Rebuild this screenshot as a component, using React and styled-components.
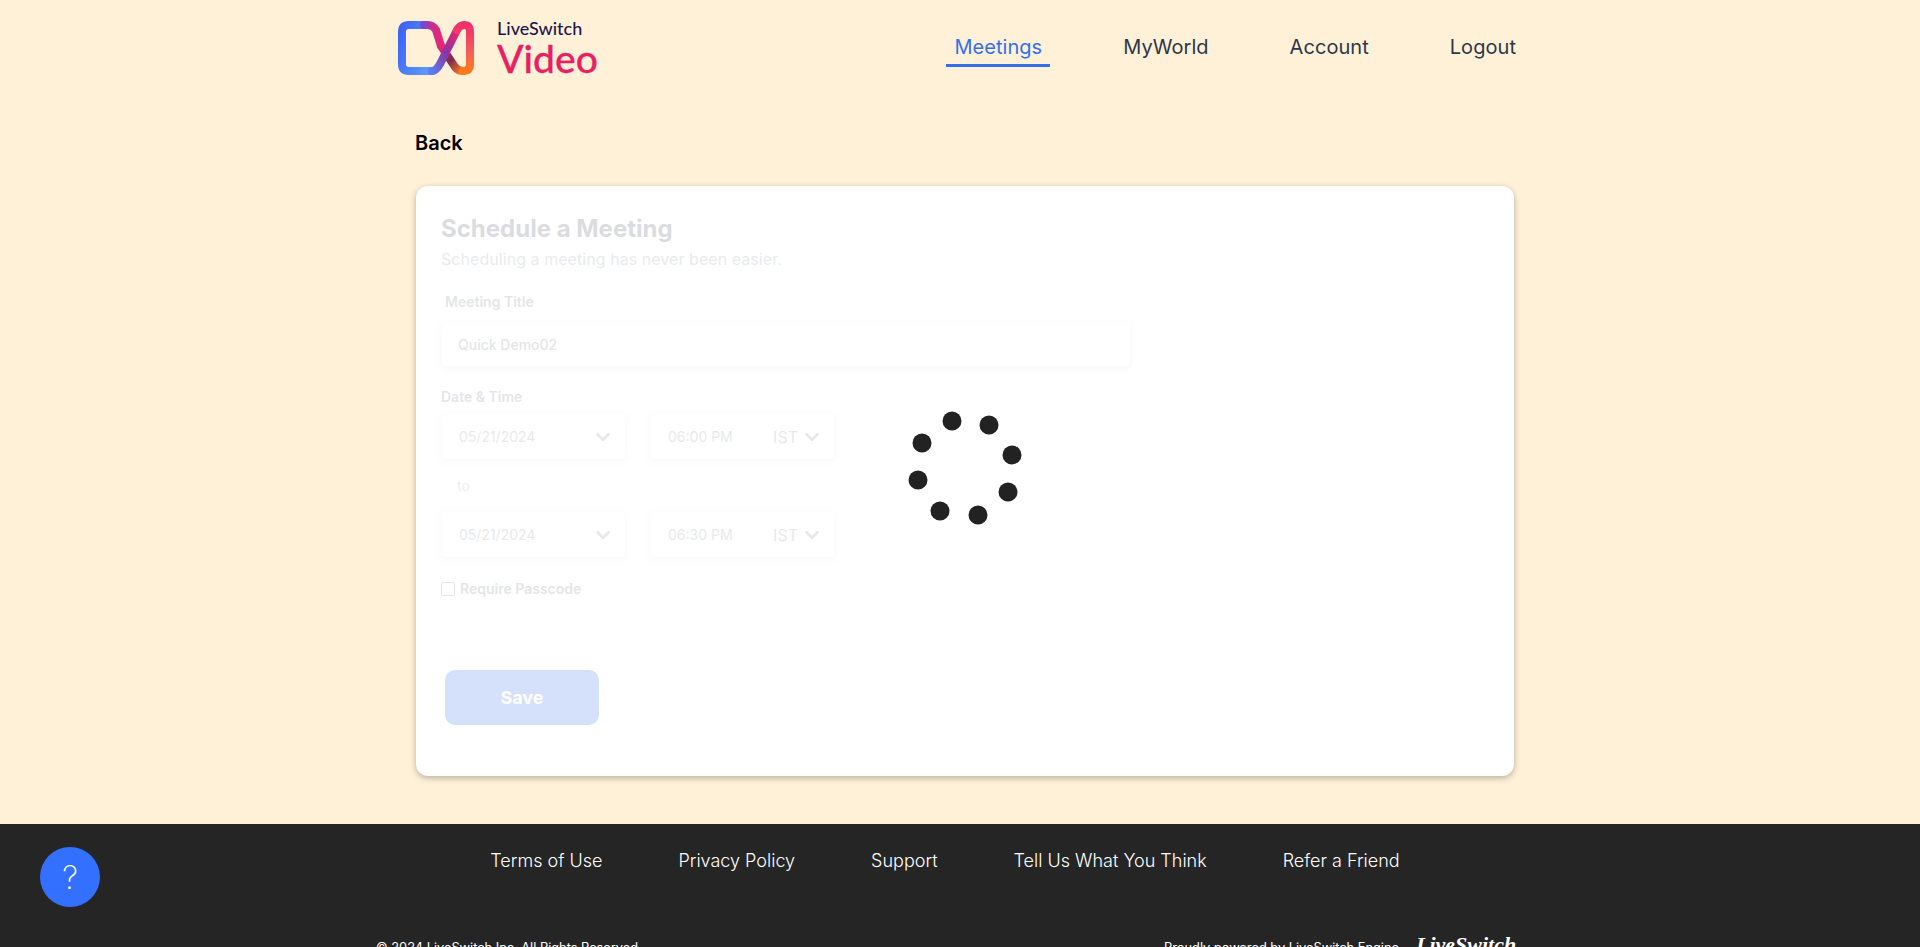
import styled, { createGlobalStyle } from 'styled-components'
import { ChevronDown } from 'lucide-react'

const GlobalStyle = createGlobalStyle`
  html, body {
    margin: 0;
    padding: 0;
    height: 100%;
    overflow: hidden;
    background: #fff1d8;
    font-family: Inter, "Liberation Sans", sans-serif;
  }
  * {
    box-sizing: border-box;
  }
`

const Page = styled.div`
  height: 947px;
  overflow: hidden;
  display: flex;
  flex-direction: column;
`
const Header = styled.header`
  width: 1126px;
  margin-left: 398px;
  height: 96px;
  display: flex;
  align-items: flex-start;
  justify-content: space-between;
`
const Logo = styled.div`
  display: flex;
  gap: 21px;
  padding-top: 20px;
`
const LogoText = styled.div`
  display: flex;
  flex-direction: column;
`
const LogoTop = styled.span`
  font-family: Lato, sans-serif;
  font-size: 18px;
  font-weight: 500;
  line-height: 17px;
  color: #1c1650;
`
const LogoBig = styled.span`
  font-family: Lato, sans-serif;
  font-size: 39px;
  font-weight: 500;
  line-height: 36px;
  margin-top: 3px;
  color: #e91e63;
  -webkit-text-stroke: 0.3px #e91e63;
`
const Nav = styled.nav`
  display: flex;
  gap: 65px;
  padding-top: 33px;
`
const NavLink = styled.a`
  font-size: 20px;
  font-weight: 400;
  letter-spacing: 0.05px;
  line-height: 28px;
  padding: 0 8px 3px;
  color: ${p => (p.$active ? '#3370e8' : '#2d3748')};
  border-bottom: 3px solid ${p => (p.$active ? '#3370e8' : 'transparent')};
`
const Main = styled.main`
  width: 1098px;
  margin-left: 416px;
  flex: 1;
`
const Back = styled.div`
  font-size: 20px;
  font-weight: 600;
  line-height: 28px;
  color: #000;
  margin: 33px 0 29px -1px;
`
const Card = styled.section`
  position: relative;
  height: 590px;
  background: #fff;
  border-radius: 12px;
  box-shadow: 0 2px 6px rgba(0, 0, 0, 0.28);
`
const Form = styled.div`
  opacity: 0.18;
  padding: 27px 25px;
`
const Title = styled.h1`
  margin: 0;
  font-size: 24px;
  font-weight: 700;
  line-height: 32px;
  color: #374151;
`
const Subtitle = styled.p`
  margin: 2px 0 0;
  font-size: 16px;
  letter-spacing: 0.055px;
  line-height: 24px;
  color: #6b7280;
  opacity: 0.8;
`
const Label = styled.label`
  display: block;
  font-size: 14px;
  font-weight: 600;
  line-height: 20px;
  color: #6b7280;
  margin: ${p => p.$margin};
`
const TextInput = styled.div`
  width: 688px;
  height: 43px;
  margin-left: 1px;
  padding-left: 16px;
  display: flex;
  align-items: center;
  border-radius: 4px;
  box-shadow: 0 2px 6px rgba(0, 0, 0, 0.14);
  font-size: 14px;
  font-weight: 500;
  color: #6b7280;
`
const Row = styled.div`
  display: flex;
  gap: 26px;
  margin-left: 1px;
`
const Field = styled.div`
  width: 183px;
  height: 45px;
  padding: 0 11px 0 17px;
  display: flex;
  align-items: center;
  justify-content: space-between;
  border-radius: 4px;
  box-shadow: 0 2px 6px rgba(0, 0, 0, 0.14);
  font-size: 14px;
  color: #6b7280;
  opacity: 0.85;
`
const Zone = styled.span`
  display: flex;
  align-items: center;
  gap: 3px;
  font-size: 16px;
`
const To = styled.div`
  font-size: 14px;
  line-height: 20px;
  color: #9ca3af;
  margin: 17px 0 16px 16px;
`
const CheckRow = styled.div`
  display: flex;
  align-items: center;
  gap: 5px;
  margin-top: 22px;
  font-size: 14px;
  font-weight: 600;
  line-height: 20px;
  color: #6b7280;
`
const Box = styled.span`
  width: 14px;
  height: 14px;
  border: 1.5px solid #6b7280;
  border-radius: 2px;
`
const Save = styled.button`
  display: block;
  width: 154px;
  height: 55px;
  margin: 71px 0 0 4px;
  border: none;
  border-radius: 10px;
  background: #1d5ce5;
  color: #fff;
  font-family: inherit;
  font-size: 18px;
  font-weight: 700;
`
const Spinner = styled.svg`
  position: absolute;
  left: 457px;
  top: 221px;
  width: 160px;
  height: 124px;
`
const Footer = styled.footer`
  height: 123px;
  flex-shrink: 0;
  background: #252525;
  color: #fff;
`
const FooterInner = styled.div`
  width: 1140px;
  margin-left: 376px;
`
const FooterLinks = styled.div`
  display: flex;
  justify-content: center;
  gap: 76px;
  padding: 25px 2px 0 0;
  font-size: 18px;
  font-weight: 300;
  line-height: 24px;
`
const FooterBottom = styled.div`
  display: flex;
  align-items: flex-start;
  justify-content: space-between;
  margin-top: 67px;
  font-size: 12.8px;
  line-height: 16px;
`
const Powered = styled.div`
  display: flex;
  gap: 17px;
`
const Script = styled.span`
  font-family: "Liberation Serif", serif;
  font-style: italic;
  font-weight: 700;
  font-size: 22px;
  line-height: 22px;
  margin-top: -6px;
  width: 100px;
`
const Help = styled.button`
  position: fixed;
  left: 40px;
  top: 847px;
  width: 60px;
  height: 60px;
  border: none;
  border-radius: 50%;
  background: #3370ff;
  color: #fff;
  font-family: inherit;
  font-size: 32px;
  font-weight: 200;
`

const LogoMark = () => (
  <svg width="78" height="56" viewBox="0 0 78 56" fill="none" strokeWidth="8" strokeLinecap="round">
    <defs>
      <linearGradient id="lsBlue" x1="0" y1="0" x2="1" y2="0.6">
        <stop offset="0" stopColor="#3d63f5" />
        <stop offset="1" stopColor="#5a97f8" />
      </linearGradient>
      <linearGradient id="lsTop" x1="0" y1="0" x2="1" y2="0">
        <stop offset="0" stopColor="#7a48d0" />
        <stop offset="0.5" stopColor="#c8308c" />
        <stop offset="1" stopColor="#ea2474" />
      </linearGradient>
      <linearGradient id="lsCross" x1="0" y1="1" x2="1" y2="0">
        <stop offset="0" stopColor="#5a7cf0" />
        <stop offset="0.5" stopColor="#8a35a5" />
        <stop offset="1" stopColor="#ee2468" />
      </linearGradient>
      <linearGradient id="lsLoop" x1="0" y1="0" x2="0" y2="1">
        <stop offset="0" stopColor="#f0306c" />
        <stop offset="0.6" stopColor="#f4605a" />
        <stop offset="1" stopColor="#ff7a1c" />
      </linearGradient>
      <linearGradient id="lsDown" x1="0" y1="0" x2="1" y2="1">
        <stop offset="0" stopColor="#e8246c" />
        <stop offset="0.5" stopColor="#7a2a50" />
        <stop offset="1" stopColor="#ff7a1c" />
      </linearGradient>
    </defs>
    <path d="M26 5H11Q4 5 4 12V44Q4 51 11 51H34" stroke="url(#lsBlue)" />
    <path d="M43 26L57 47Q60 51 65 51" stroke="url(#lsDown)" />
    <path d="M26 5H30Q35 5 38 10L43 26" stroke="url(#lsTop)" />
    <path d="M59 10L42 44Q38 51 34 51" stroke="url(#lsCross)" />
    <path d="M59 10Q62 5 66 5Q72 5 72 12V44Q72 51 65 51" stroke="url(#lsLoop)" />
  </svg>
)

const dots = [
  [79, 14], [116, 18], [139, 48], [135, 85],
  [105, 108], [67, 104], [45, 73], [49, 36],
]

const DateRow = ({ time }) => (
  <Row>
    <Field>
      05/21/2024
      <ChevronDown size={22} strokeWidth={3} />
    </Field>
    <Field>
      {time}
      <Zone>
        IST
        <ChevronDown size={22} strokeWidth={3} />
      </Zone>
    </Field>
  </Row>
)

const App = () => {
  return (
    <Page>
      <GlobalStyle />
      <Header>
        <Logo>
          <LogoMark />
          <LogoText>
            <LogoTop>LiveSwitch</LogoTop>
            <LogoBig>Video</LogoBig>
          </LogoText>
        </Logo>
        <Nav>
          <NavLink $active>Meetings</NavLink>
          <NavLink>MyWorld</NavLink>
          <NavLink>Account</NavLink>
          <NavLink>Logout</NavLink>
        </Nav>
      </Header>
      <Main>
        <Back>Back</Back>
        <Card>
          <Form>
            <Title>Schedule a Meeting</Title>
            <Subtitle>Scheduling a meeting has never been easier.</Subtitle>
            <Label $margin="21px 0 11px 4px">Meeting Title</Label>
            <TextInput>Quick Demo02</TextInput>
            <Label $margin="21px 0 7px 0">Date &amp; Time</Label>
            <DateRow time="06:00 PM" />
            <To>to</To>
            <DateRow time="06:30 PM" />
            <CheckRow>
              <Box />
              Require Passcode
            </CheckRow>
            <Save>Save</Save>
          </Form>
          <Spinner viewBox="0 0 160 124">
            {dots.map(([x, y]) => (
              <circle key={x + '-' + y} cx={x} cy={y} r="9.5" fill="#222" />
            ))}
          </Spinner>
        </Card>
      </Main>
      <Footer>
        <FooterInner>
          <FooterLinks>
            <span>Terms of Use</span>
            <span>Privacy Policy</span>
            <span>Support</span>
            <span>Tell Us What You Think</span>
            <span>Refer a Friend</span>
          </FooterLinks>
          <FooterBottom>
            <span>© 2024 LiveSwitch Inc. All Rights Reserved.</span>
            <Powered>
              <span>Proudly powered by LiveSwitch Engine</span>
              <Script>LiveSwitch</Script>
            </Powered>
          </FooterBottom>
        </FooterInner>
      </Footer>
      <Help>?</Help>
    </Page>
  )
}

export default App
